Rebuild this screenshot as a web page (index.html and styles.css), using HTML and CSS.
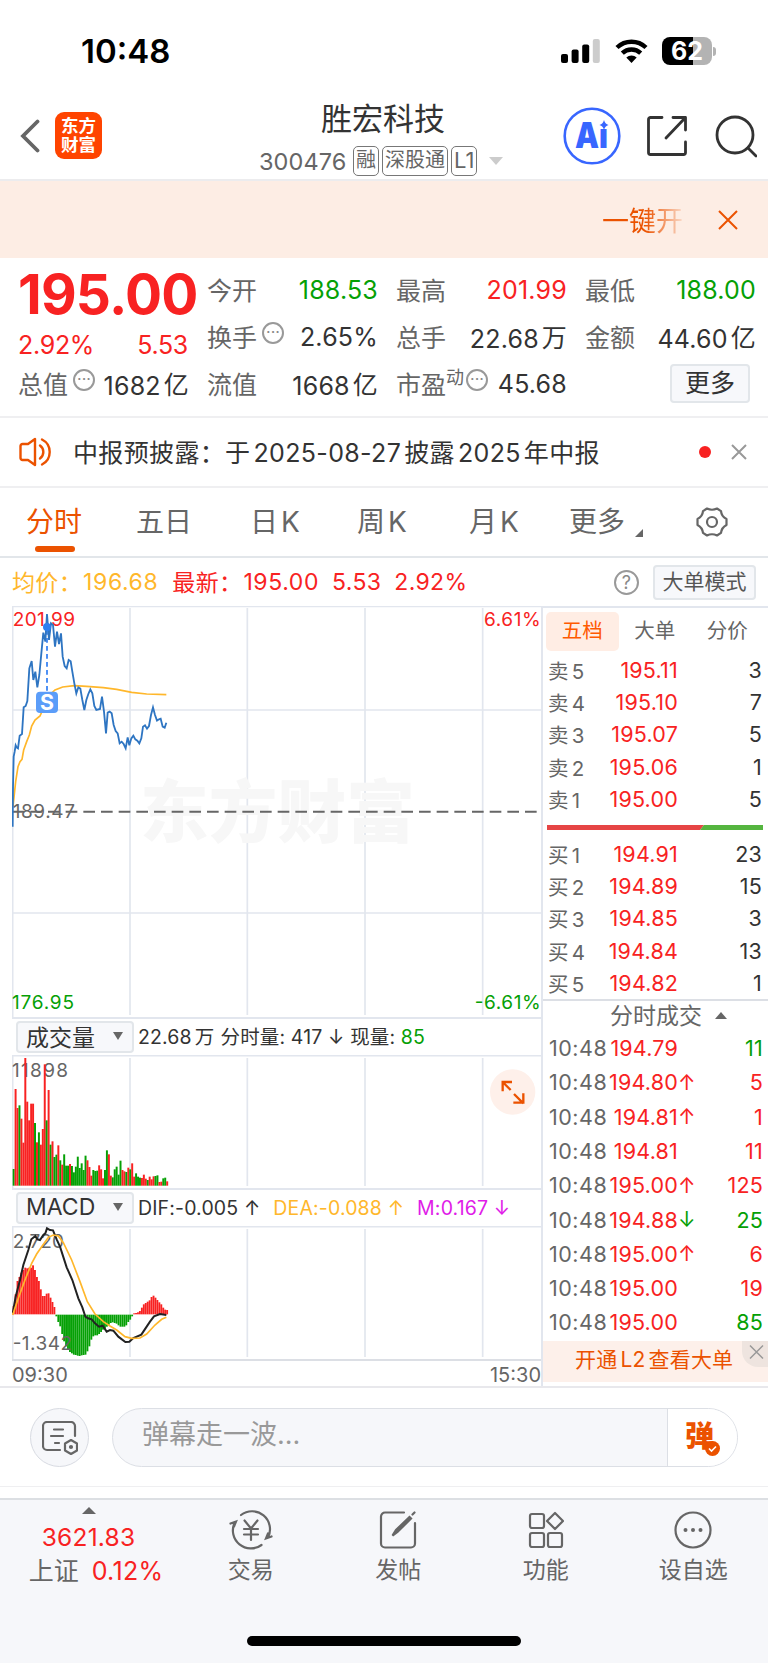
FILE: index.html
```html
<!DOCTYPE html>
<html lang="zh-CN">
<head>
    <meta charset="UTF-8">
    <title>胜宏科技 300476</title>
    <link rel="stylesheet" href="styles.css">
</head>
<body>
<div class="status">
    <span class="time">10:48</span>
    <div class="status-icons">
        <svg width="39" height="24" viewBox="0 0 39 24">
            <rect x="0" y="15" width="7" height="9" rx="2"/>
            <rect x="10.6" y="10.5" width="7" height="13.5" rx="2"/>
            <rect x="21.2" y="5.5" width="7" height="18.5" rx="2"/>
            <rect x="31.8" y="0" width="7" height="24" rx="2" fill="#ccc"/>
        </svg>
        <svg class="wifi" width="33" height="24" viewBox="0 0 33 24">
            <path d="M2 8.5a21 21 0 0 1 29 0M7.3 14.2a13.3 13.3 0 0 1 18.4 0" fill="none" stroke="#000" stroke-width="4.4"/>
            <path d="M16.5 24l-5.2-5.5a7.6 7.6 0 0 1 10.4 0z"/>
        </svg>
        <div class="battery"><span>62</span></div>
        <i class="battery-cap"></i>
    </div>
</div>

<div class="header">
    <div class="header-left">
        <svg width="20" height="34" viewBox="0 0 20 34"><path d="M17.5 2.5L3 17l14.5 14.5" fill="none" stroke="#666" stroke-width="3.8" stroke-linecap="round"/></svg>
        <div class="logo">东方<br>财富</div>
    </div>
    <div class="title">
        <h1>胜宏科技</h1>
        <p><span class="code">300476</span><b>融</b><b>深股通</b><b class="l1">L1</b><i class="tri-down"></i></p>
    </div>
    <div class="header-right">
        <svg width="58" height="58" viewBox="0 0 58 58">
            <circle cx="29" cy="29" r="27.3" fill="none" stroke="#3866ff" stroke-width="2.6"/>
            <text x="12" y="41" class="ai" textLength="33" lengthAdjust="spacingAndGlyphs">Aı</text>
            <path d="M41 13q1 4 4.500 5q-3.500 1-4.500 5q-1-4-4.500-5q3.500-1 4.500-5z" fill="#3866ff"/>
        </svg>
        <svg class="share" width="42" height="42" viewBox="0 0 42 42" fill="none" stroke="#333" stroke-width="2.8" stroke-linejoin="round" stroke-linecap="round">
            <path d="M16 2.5H4.5a2 2 0 0 0-2 2v33a2 2 0 0 0 2 2h33a2 2 0 0 0 2-2V27M27 2.5h12.5V15M39 3L20 23"/>
        </svg>
        <svg class="search" width="42" height="44" viewBox="0 0 42 44" fill="none" stroke="#333" stroke-width="2.8" stroke-linecap="round">
            <circle cx="20" cy="21" r="18"/><path d="M33 34l8 8"/>
        </svg>
    </div>
</div>

<div class="banner">
    <span>一键开</span>
    <svg width="20" height="20" viewBox="0 0 20 20"><path d="M1 1l18 18M19 1L1 19" stroke="#eb5200" stroke-width="2"/></svg>
</div>

<div class="quote">
    <div class="last">
        <strong>195.00</strong>
        <p class="red"><span>2.92%</span><span>5.53</span></p>
    </div>
    <div class="cell"><label>今开</label><span class="green">188.53</span></div>
    <div class="cell"><label>最高</label><span class="red">201.99</span></div>
    <div class="cell"><label>最低</label><span class="green">188.00</span></div>
    <div class="cell"><label>换手</label><i class="dots">···</i><span>2.65%</span></div>
    <div class="cell"><label>总手</label><span>22.68<u>万</u></span></div>
    <div class="cell"><label>金额</label><span>44.60<u>亿</u></span></div>
    <div class="cell"><label>总值</label><i class="dots">···</i><span>1682<u>亿</u></span></div>
    <div class="cell"><label>流值</label><span>1668<u>亿</u></span></div>
    <div class="cell"><label>市盈</label><sup>动</sup><i class="dots near">···</i><span>45.68</span></div>
    <div class="cell"><button class="more">更多</button></div>
</div>

<div class="news">
    <svg width="34" height="30" viewBox="0 0 34 30" fill="none" stroke="#eb5200" stroke-width="2.4" stroke-linejoin="round" stroke-linecap="round">
        <path d="M16 2v26l-7-5H3.5a2 2 0 0 1-2-2V9a2 2 0 0 1 2-2H9z"/>
        <path d="M21 8.5a8 8 0 0 1 0 13M23 2.5a14 14 0 0 1 0 25"/>
    </svg>
    <p>中报预披露：于<s></s>2025-08-27<s></s>披露<s></s>2025<s></s>年中报</p>
    <i class="dot"></i>
    <svg width="16" height="16" viewBox="0 0 16 16"><path d="M1 1l14 14M15 1L1 15" stroke="#999" stroke-width="2"/></svg>
</div>

<ul class="tabs">
    <li class="active">分时</li>
    <li>五日</li>
    <li>日<s></s>K</li>
    <li>周<s></s>K</li>
    <li>月<s></s>K</li>
    <li>更多<i class="corner"></i></li>
    <li>
        <svg width="32" height="32" viewBox="0 0 32 32" fill="none" stroke="#666" stroke-width="2.2" stroke-linejoin="round">
            <path d="M11 2.5q5 2.5 10 0l4 2.6q.5 5.4 5.5 8v5.8q-5 2.6-5.5 8l-4 2.6q-5-2.5-10 0l-4-2.6q-.5-5.4-5.5-8v-5.8q5-2.6 5.5-8z"/>
            <circle cx="16" cy="16" r="5"/>
        </svg>
    </li>
</ul>

<div class="legend">
    <span class="avg t1">均价：</span><span class="avg v1">196.68</span>
    <span class="red t2">最新：</span><span class="red v1">195.00</span><span class="red v3">5.53</span><span class="red v4">2.92%</span>
    <i class="help">?</i>
    <button class="mode">大单模式</button>
</div>

<div class="main">
    <div class="charts">
        <svg class="chart" width="530" height="411" viewBox="36 18 1590 1233">
            <g class="grid">
                <path d="M36 19H1626M38 18V1251M390 24V1245M742 24V1245M1095 24V1245M1448 24V1245M36 330H1626M36 939H1626"/>
            </g>
            <text x="420" y="712" class="mark" textLength="825">东方财富</text>
            <path d="M38 635H1620" stroke="#666" stroke-width="6" stroke-dasharray="35 18"/>
            <path d="M141 90V275" stroke="#4d90f5" stroke-width="6" stroke-dasharray="14 10"/>
            <polyline class="avg-line" points="39,620 47,545 54,500 60,485 66,478 71,450 80,425 88,405 95,378 105,360 120,348 130,325 141,300 152,282 165,270 188,261 223,257 260,259 310,263 350,268 395,277 440,282 499,284"/>
            <rect x="108" y="275" width="66" height="64" rx="12" fill="#5b9df9"/>
            <text x="141" y="331" class="sell">S</text>
            <text x="38" y="77" class="num up" textLength="187">201.99</text>
            <text x="1622" y="77" class="num up" text-anchor="end" textLength="170">6.61%</text>
            <text x="38" y="654" class="num" textLength="187">189.47</text>
            <text x="36" y="1228" class="num down" textLength="186">176.95</text>
            <text x="1622" y="1228" class="num down" text-anchor="end" textLength="198">-6.61%</text>
            <polyline class="price-line" points="38,680 39,560 41,470 44,455 47,436 50,442 54,445 59,407 66,402 71,322 77,318 82,303 88,205 95,183 100,240 106,215 112,262 118,225 124,160 130,98 136,125 141,42 147,120 153,70 159,75 165,140 171,95 177,132 183,100 188,170 194,198 200,205 206,180 212,184 217,215 223,250 229,280 235,262 241,266 247,300 253,330 259,300 265,282 271,268 277,280 283,318 289,330 300,327 306,290 312,335 318,400 323,338 329,335 335,340 341,375 347,393 353,400 359,430 365,425 371,432 377,445 383,412 388,436 394,415 400,407 406,418 412,422 418,430 424,415 429,380 435,376 441,386 447,378 453,345 459,322 465,345 471,362 477,358 482,356 488,380 494,383 499,368"/>
            <circle cx="141" cy="81" r="12" fill="#2d7ff0"/>
        </svg>
        <div class="bar-head">
            <button>成交量<i></i></button>
            <p>22.68<s></s>万<s></s><s></s>分时量: 417 ↓ 现量: <span class="green">85</span></p>
        </div>
        <svg class="chart" width="530" height="133" viewBox="36 225 1590 399">
            <g class="grid">
                <path d="M36 227H1626M38 225V624M390 234V618M742 234V618M1095 234V618M1448 234V618"/>
            </g>
            <text x="36" y="292" class="num" textLength="168">11898</text>
            <g id="volume"></g>
            <circle cx="1538" cy="336" r="68" fill="#fef0ea"/>
            <path d="M1532 330l-24-24M1508 334v-28h28M1542 342l28 28M1540 368h30v-28" fill="none" stroke="#eb5200" stroke-width="7"/>
        </svg>
        <div class="bar-head">
            <button>MACD<i></i></button>
            <p class="macd"><span>DIF:-0.005 ↑</span><span class="avg">DEA:-0.088 ↑</span><span class="pink">M:0.167 ↓</span></p>
        </div>
        <svg class="chart" width="530" height="133" viewBox="36 138 1590 399">
            <g class="grid">
                <path d="M36 140H1626M38 138V537M390 147V531M742 147V531M1095 147V531M1448 147V531"/>
            </g>
            <g id="macd"></g>
            <text x="38" y="204" class="num" textLength="154">2.720</text>
            <text x="38" y="511" class="num" textLength="178">-1.342</text>
            <polyline class="dif" points="38,400 47,350 60,300 70,255 85,210 94,178 106,168 112,178 120,180 130,165 136,160 141,145 150,150 159,151 170,178 180,200 200,262 217,300 235,355 247,382 256,410 264,415 275,418 285,430 297,440 308,437 320,455 330,450 340,452 355,470 376,486 388,485 400,474 424,464 440,440 450,425 462,409 480,402 499,405"/>
            <polyline class="avg-line" points="38,405 55,355 75,300 95,250 110,222 125,200 145,172 160,165 175,168 190,188 215,240 240,305 262,365 285,402 310,425 330,438 350,450 375,470 395,475 420,474 440,462 465,435 485,418 499,412"/>
        </svg>
        <div class="axis"><span>09:30</span><span>15:30</span></div>
    </div>

    <div class="side">
        <ul class="side-tabs"><li class="active">五档</li><li>大单</li><li>分价</li></ul>
        <ul class="book">
            <li><label>卖<s></s>5</label><b>195.11</b><span>3</span></li>
            <li><label>卖<s></s>4</label><b>195.10</b><span>7</span></li>
            <li><label>卖<s></s>3</label><b>195.07</b><span>5</span></li>
            <li><label>卖<s></s>2</label><b>195.06</b><span>1</span></li>
            <li><label>卖<s></s>1</label><b>195.00</b><span>5</span></li>
        </ul>
        <svg class="ratio" width="216" height="5" viewBox="0 0 216 5">
            <path d="M0 0h157l-4 5H0z" fill="#e64545"/><path d="M157 0h59v5h-63z" fill="#55b53f"/>
        </svg>
        <ul class="book">
            <li><label>买<s></s>1</label><b>194.91</b><span>23</span></li>
            <li><label>买<s></s>2</label><b>194.89</b><span>15</span></li>
            <li><label>买<s></s>3</label><b>194.85</b><span>3</span></li>
            <li><label>买<s></s>4</label><b>194.84</b><span>13</span></li>
            <li><label>买<s></s>5</label><b>194.82</b><span>1</span></li>
        </ul>
        <div class="deal-title">分时成交<i class="tri-up"></i></div>
        <ul class="deals">
            <li><label>10:48</label><b>194.79</b><i></i><span class="green">11</span></li>
            <li><label>10:48</label><b>194.80</b><i class="red">↑</i><span class="red">5</span></li>
            <li><label>10:48</label><b>194.81</b><i class="red">↑</i><span class="red">1</span></li>
            <li><label>10:48</label><b>194.81</b><i></i><span class="red">11</span></li>
            <li><label>10:48</label><b>195.00</b><i class="red">↑</i><span class="red">125</span></li>
            <li><label>10:48</label><b>194.88</b><i class="green">↓</i><span class="green">25</span></li>
            <li><label>10:48</label><b>195.00</b><i class="red">↑</i><span class="red">6</span></li>
            <li><label>10:48</label><b>195.00</b><i></i><span class="red">19</span></li>
            <li><label>10:48</label><b>195.00</b><i></i><span class="green">85</span></li>
        </ul>
        <div class="level2">开通<s></s>L2<s></s>查看大单
            <svg width="26" height="26" viewBox="0 0 26 26"><path d="M0 0h26v26H16A16 16 0 0 1 0 10z" fill="#eee4df"/><path d="M8 4.5l13 13M21 4.5L8 17.5" stroke="#999" stroke-width="1.5"/></svg>
        </div>
    </div>
</div>

<div class="chat">
    <div class="chat-set">
        <svg width="36" height="34" viewBox="0 0 36 34" fill="none" stroke="#666" stroke-width="2.2" stroke-linecap="round" stroke-linejoin="round">
            <path d="M33 15V5a4 4 0 0 0-4-4H5a4 4 0 0 0-4 4v20a4 4 0 0 0 4 4h13M12 8.5h9M9 15h12M13 22h4"/>
            <path d="M29 19l6 3.5v7L29 33l-6-3.5v-7z"/><circle cx="29" cy="26" r="1"/>
        </svg>
    </div>
    <div class="chat-input">
        <p>弹幕走一波...</p>
        <div class="chat-btn"><b>弹</b>
            <svg width="15" height="15" viewBox="0 0 15 15"><circle cx="7.5" cy="7.5" r="7.5" fill="#eb5200"/><path d="M4 7.5l2.5 2.5L11 5.5" fill="none" stroke="#fff" stroke-width="1.6"/></svg>
        </div>
    </div>
</div>

<div class="tabbar">
    <div class="index">
        <i class="tri-up"></i>
        <b>3621.83</b>
        <p>上证<span>0.12%</span></p>
    </div>
    <div class="item">
        <svg width="44" height="40" viewBox="0 0 44 40" fill="none" stroke="#666" stroke-width="2.2" stroke-linecap="round">
            <path d="M12 5A18 18 0 0 1 39 27.5M5.5 13a18 18 0 0 0 27 22M1.5 13.5l5.5-2-2 5M42.5 26.5l-5.5 2 2-5"/>
            <path d="M15.5 10.5l6.5 8 6.5-8M22 18.5V30M15 19h14M15 24.5h14"/>
        </svg>
        <span>交易</span>
    </div>
    <div class="item">
        <svg width="38" height="40" viewBox="0 0 38 40" fill="none" stroke="#666" stroke-width="2.2" stroke-linecap="round">
            <path d="M25 2.5H6a4 4 0 0 0-4 4v27a4 4 0 0 0 4 4h26a4 4 0 0 0 4-4V13"/>
            <path d="M13.5 25.5l3.5-5.5L30.5 7l1.5 1.5L18.5 22zM33.5 4.5l2-2" fill="#666"/>
        </svg>
        <span>发帖</span>
    </div>
    <div class="item">
        <svg width="36" height="40" viewBox="0 0 36 40" fill="none" stroke="#666" stroke-width="2.2" stroke-linejoin="round">
            <rect x="2" y="4" width="14" height="14" rx="2"/><rect x="2" y="23" width="14" height="14" rx="2"/><rect x="20" y="23" width="14" height="14" rx="2"/>
            <path d="M27 3l8 8-8 8-8-8z"/>
        </svg>
        <span>功能</span>
    </div>
    <div class="item">
        <svg width="40" height="40" viewBox="0 0 40 40"><circle cx="20" cy="20" r="17.5" fill="none" stroke="#666" stroke-width="2.2"/><g fill="#666"><circle cx="12.5" cy="20" r="2"/><circle cx="20" cy="20" r="2"/><circle cx="27.5" cy="20" r="2"/></g></svg>
        <span>设自选</span>
    </div>
    <i class="home"></i>
</div>

<script type="text/javascript">
    // 每分钟成交量，r 涨 g 跌
    var vol = "g50 r290 r233 g241 r201 r129 r383 r252 r196 r246 r246 g188 r130 g160 r123 r170 r364 g196 r287 g123 r133 g86 g93 r121 g76 r63 g94 g60 g60 r65 g59 g40 g57 g87 g53 g67 g47 g90 r76 r56 r30 g47 g44 g45 r61 r49 r22 g47 g106 r94 r30 g25 g49 g57 g33 g75 r47 r43 g41 r54 g49 r67 r27 g37 g27 g24 r23 r33 r21 g17 r27 r19 r28 g29 g31 r11 r12 g22 g24 r13".split(" ");
    var macd = [25,60,100,112,125,133,140,138,140,140,147,133,112,100,75,55,55,62,63,50,37,22,-5,-22,-35,-58,-80,-95,-105,-112,-116,-120,-121,-123,-124,-122,-121,-120,-110,-95,-75,-65,-62,-62,-58,-52,-45,-42,-36,-30,-25,-23,-25,-27,-32,-36,-36,-36,-32,-22,-15,-5,3,4,6,10,20,30,34,38,42,52,56,50,43,36,30,20,14,13];
    var step = 5.83;

    function bar(x, y, h, color, w) {
        return '<rect x="' + x.toFixed(1) + '" y="' + y + '" width="' + w + '" height="' + h + '" fill="' + color + '"/>';
    }

    var html = "";
    for (var i = 0; i < vol.length; i++) {
        var h = Number(vol[i].slice(1));
        html += bar(38 + i * step, 617 - h, h, vol[i].charAt(0) == "r" ? "#f82222" : "#05a005", 5.9);
    }
    document.getElementById("volume").innerHTML = html;

    html = "";
    for (var j = 0; j < macd.length; j++) {
        var v = macd[j];
        html += bar(38 + j * step, v > 0 ? 403 - v : 404, Math.abs(v), v > 0 ? "#f82222" : "#05a005", 5.6);
    }
    document.getElementById("macd").innerHTML = html;
</script>
</body>
</html>
```
FILE: styles.css
```css
*{
    box-sizing:border-box;
}
body,div,ul,li,p,h1{
    margin:0;
    padding:0;
}
ul{
    list-style-type:none;
}
body{
    width:768px;
    height:1663px;
    overflow:hidden;
    background:#fff;
    color:#333;
    font-family:Inter,"Noto Sans CJK SC",sans-serif;
}
i,em,b,u,s{
    font-style:normal;
    font-weight:400;
    text-decoration:none;
}
s{
    display:inline-block;
    width:3px;
}
svg{display:block;flex:none;}
button{
    font-family:inherit;
    padding:0;
    color:#333;
    background:#f7f8fb;
    border:2px solid #e2e6ea;
    border-radius:4px;
}
.red{color:#f82222;}
.green{color:#05a005;}
.avg{color:#ffb72b;}
.pink{color:#e01ce8;}

/* 状态栏 */
.status{
    display:flex;
    justify-content:space-between;
    height:90px;
    padding:37px 52px 0 81px;
}
.time{
    font-size:33px;
    line-height:29px;
    font-weight:600;
    color:#000;
}
.status-icons{display:flex;align-items:center;height:28px;}
.wifi{margin:0 14px 0 15px;}
.battery{
    width:50px;
    height:28px;
    border-radius:8px;
    background:linear-gradient(90deg,#000 62%,#b3b3b3 62%);
    color:#fff;
    font-size:25px;
    line-height:28px;
    font-weight:700;
    text-align:center;
}
.battery-cap{width:3px;height:9px;margin-left:1px;border-radius:0 4px 4px 0;background:#b3b3b3;}

/* 标题栏 */
.header{
    display:grid;
    grid-template-columns:240px 1fr 228px;
    height:91px;
    border-bottom:2px solid #ececee;
}
.header-left{display:flex;height:91px;align-items:center;padding-left:20px;}
.logo{
    width:47px;
    height:47px;
    margin-left:15px;
    padding-top:4px;
    border-radius:9px;
    background:#ff4400;
    color:#fff;
    font-size:17.5px;
    line-height:19px;
    font-weight:700;
    text-align:center;
}
.title h1{
    margin-top:9px;
    font-size:31px;
    line-height:40px;
    font-weight:400;
    text-align:center;
    padding-right:14px;
}
.title p{display:flex;align-items:center;height:30px;margin-top:7px;padding-left:19px;color:#666;}
.code{width:94px;font-size:23.5px;letter-spacing:.1px;}
.title b{
    height:30px;
    margin-right:3px;
    padding:0 2px;
    border:1.5px solid #777;
    border-radius:5px;
    font-size:20px;
    line-height:27px;
}
.title .l1{font-size:22px;}
.tri-down{margin-left:9px;border:7px solid transparent;border-top:8px solid #ccc;border-bottom:0;}
.header-right{display:flex;height:91px;align-items:center;padding-left:23px;}
.ai{font-size:35px;font-weight:900;fill:#3866ff;}
.share{margin-left:25px;}
.search{margin-left:27px;}

.banner{
    display:flex;
    align-items:center;
    justify-content:flex-end;
    height:77px;
    padding-right:30px;
    background:#fdede4;
}
.banner span{
    width:86px;
    margin-right:30px;
    white-space:nowrap;
    font-size:27px;
    background:linear-gradient(90deg,#eb5200 50%,rgba(235,82,0,0) 100%);
    -webkit-background-clip:text;
    background-clip:text;
    color:transparent;
}

/* 报价 */
.quote{
    display:grid;
    grid-template-columns:repeat(4,169px);
    grid-template-rows:repeat(3,47px);
    column-gap:20px;
    height:160px;
    padding:9px 0 0 19px;
    border-bottom:2px solid #efeff1;
    font-size:25px;
}
.last{grid-row:span 2;margin-left:-1px;padding-top:1px;}
.last strong{
    display:block;
    height:52px;
    font-size:55px;
    line-height:52px;
    font-weight:700;
    color:#f82222;
    letter-spacing:-.8px;
}
.last p{display:flex;justify-content:space-between;line-height:50px;letter-spacing:-.3px;}
.cell{display:flex;align-items:center;white-space:nowrap;}
.cell label{margin:-3px 0 0 -1px;color:#666;}
.cell span{margin:-1px -1px 0 auto;letter-spacing:.2px;}
.cell u{position:relative;top:-1px;margin-left:3px;}
.cell sup{align-self:flex-start;font-size:18px;line-height:34px;color:#666;}
.dots{
    width:22px;
    height:22px;
    margin:-10px 0 0 5px;
    border:2px solid #999;
    border-radius:50%;
    font-size:16px;
    line-height:17px;
    text-align:center;
    color:#888;
}
.near{margin-left:2px;}
.more{width:80px;height:39px;margin-left:84px;margin-top:-3px;font-size:25px;line-height:32px;}

.news{display:flex;align-items:center;height:70px;padding:0 21px 0 19px;border-bottom:2px solid #efeff1;}
.news p{flex:1;margin-top:-2px;padding-left:20px;font-size:25px;letter-spacing:.35px;}
.dot{width:12px;height:12px;margin-right:20px;border-radius:50%;background:#f82222;}

/* 周期切换 */
.tabs{
    display:grid;
    grid-template-columns:110px 114px 107px 112px 100px 127px 40px;
    align-items:center;
    height:70px;
    padding-left:26px;
    border-bottom:2px solid #e2e6ea;
    font-size:28px;
    line-height:42px;
    color:#666;
}
.tabs li{position:relative;}
.tabs .active{color:#eb5200;}
.tabs .active:after{
    content:"";
    position:absolute;
    left:9px;
    bottom:-9px;
    width:40px;
    height:6px;
    border-radius:3px;
    background:#eb5200;
}
.corner{position:absolute;left:66px;bottom:6px;border-left:8px solid transparent;border-bottom:8px solid #666;}

.legend{display:flex;align-items:center;height:48px;padding:0 12px;font-size:23px;letter-spacing:.35px;}
.t1,.t2{position:relative;top:-1px;}
.v1{margin-left:1px;letter-spacing:.6px;}
.t2{margin-left:14px;}
.v3,.v4{margin-left:13px;}
.help{
    width:25px;
    height:25px;
    margin-left:auto;
    border:2px solid #999;
    border-radius:50%;
    font-size:18px;
    line-height:21px;
    text-align:center;
    color:#888;
}
.mode{width:103px;height:35px;margin-left:14px;font-size:21px;line-height:28px;color:#555;}

/* 图表区 */
.main{display:flex;height:782px;border-bottom:2px solid #e8e8ec;}
.charts{width:541px;padding-left:12px;}
.grid path{fill:none;stroke:#e2e6ee;stroke-width:5;}
.num{font-size:57px;fill:#666;}
.up{fill:#f82222;}
.down{fill:#05a005;}
.mark{font-size:206px;font-weight:900;fill:#f7f7f7;}
.sell{font-size:64px;font-weight:700;fill:#fff;text-anchor:middle;}
.price-line{fill:none;stroke:#2e75c2;stroke-width:5.5;}
.avg-line{fill:none;stroke:#ffb72b;stroke-width:5;}
.dif{fill:none;stroke:#222;stroke-width:6;}
.bar-head{display:flex;align-items:center;height:38px;border-top:2px solid #e2e6ee;}
.bar-head button{
    display:flex;
    align-items:center;
    justify-content:space-between;
    width:118px;
    height:32px;
    margin:0 4px;
    padding:0 9px 2px 8px;
    font-size:23px;
}
.bar-head button i{border:5px solid transparent;border-top:8px solid #666;border-bottom:0;}
.bar-head p{margin-top:-3px;font-size:19.5px;letter-spacing:.15px;white-space:pre;}
.bar-head .macd{margin-top:0;}
.macd span{margin-right:13px;}
.axis{display:flex;justify-content:space-between;height:28px;border-top:2px solid #dcdfe5;font-size:20px;line-height:28px;color:#666;}

/* 盘口 */
.side{flex:1;border-left:2px solid #e2e6ee;}
.side-tabs{display:flex;height:48px;padding:4px 0 0 3px;border-top:2px solid #e2e6ee;font-size:20.5px;line-height:37px;color:#666;}
.side-tabs li{width:72.5px;height:39px;text-align:center;}
.side-tabs .active{background:#ffede4;color:#ff5a00;border-radius:5px;}
.book li,.deals li{display:flex;align-items:center;height:32.2px;padding:0 6px 0 5px;font-size:21.5px;letter-spacing:.2px;}
.book label{width:40px;font-size:20.5px;color:#666;}
.book b,.deals b{width:90px;text-align:right;color:#f82222;}
.book span,.deals span{margin-left:auto;}
.ratio{margin:10px 0 8px 4px;}
.deal-title{display:flex;align-items:center;height:32px;padding-left:67px;border-top:2px solid #dcdfe5;font-size:23px;line-height:30px;color:#666;}
.tri-up{border:6px solid transparent;border-bottom:7px solid #666;border-top:0;}
.deal-title .tri-up{margin-left:13px;}
.deals li{height:34.3px;padding-right:5px;}
.deals label{width:57px;padding-left:1px;color:#666;letter-spacing:.5px;}
.deals b{width:73px;}
.deals i{width:16px;text-align:center;font-size:21px;}
.level2{
    position:relative;
    height:41px;
    margin-top:1px;
    padding-left:32px;
    background:#fdf0ea;
    font-size:21px;
    line-height:38px;
    letter-spacing:.2px;
    color:#eb5200;
}
.level2 svg{position:absolute;top:0;right:0;}

/* 弹幕 */
.chat{display:flex;height:99px;padding:20px 30px 0;border-bottom:1px solid #efeff1;}
.chat-set{
    display:flex;
    align-items:center;
    justify-content:center;
    width:59px;
    height:59px;
    border:1px solid #d8dbe2;
    border-radius:50%;
    background:#f6f7fa;
}
.chat-input{
    display:flex;
    width:626px;
    height:59px;
    margin-left:23px;
    border:1.5px solid #dcdfe5;
    border-radius:30px;
    background:#f6f7fa;
    overflow:hidden;
}
.chat-input p{flex:1;padding-left:29px;font-size:27px;line-height:52px;color:#999;}
.chat-btn{position:relative;width:70px;padding-left:17px;border-left:1.5px solid #dcdfe5;background:#fff;}
.chat-btn b{font-size:29px;line-height:55px;font-weight:900;color:#eb5200;}
.chat-btn svg{position:absolute;left:37px;top:32px;}

/* 底部导航 */
.tabbar{
    position:relative;
    display:flex;
    height:166px;
    margin-top:11px;
    padding-top:7px;
    border-top:2px solid #dcdfe3;
    background:#f6f7fa;
    color:#666;
}
.index{display:flex;flex-direction:column;align-items:center;width:177px;}
.index b{margin-top:6px;font-size:24.5px;line-height:34px;color:#f82222;letter-spacing:.2px;}
.index p{font-size:25px;line-height:34px;padding-left:15px;}
.index span{margin-left:13px;color:#f82222;letter-spacing:.3px;}
.index .tri-up{border-width:0 7px 7px;}
.item{display:flex;flex-direction:column;align-items:center;width:147.5px;padding-top:3px;font-size:23px;line-height:41px;}
.home{position:absolute;left:247px;bottom:18px;width:274px;height:10px;border-radius:5px;background:#000;}
```
